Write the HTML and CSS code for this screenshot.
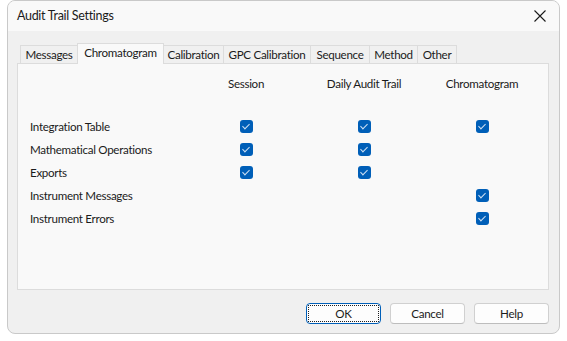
FILE: index.html
```html
<!DOCTYPE html>
<html lang="en">
<head>
    <meta charset="UTF-8">
    <title>Audit Trail Settings</title>
    <link rel="stylesheet" href="styles.css">
</head>
<body>
    <div class="window">
        <div class="titlebar">
            <span class="title">Audit Trail Settings</span>
            <svg class="close" width="12" height="12" viewBox="0 0 12 12">
                <path d="M0.5 0.5 L11.5 11.5 M11.5 0.5 L0.5 11.5" stroke="#1a1a1a" stroke-width="1.1" fill="none"/>
            </svg>
        </div>
        <div class="content">
            <div class="tabs">
                <div class="tab t-messages">Messages</div>
                <div class="tab active t-chrom">Chromatogram</div>
                <div class="tab t-calib">Calibration</div>
                <div class="tab t-gpc">GPC Calibration</div>
                <div class="tab t-seq">Sequence</div>
                <div class="tab t-method">Method</div>
                <div class="tab t-other">Other</div>
            </div>
            <div class="panel">
                <div class="grid">
                    <div></div>
                    <div class="head">Session</div>
                    <div class="head">Daily Audit Trail</div>
                    <div class="head">Chromatogram</div>
                </div>
                <div class="grid rows">
                    <div class="label">Integration Table</div>
                    <div class="cell"><span class="check"></span></div>
                    <div class="cell"><span class="check"></span></div>
                    <div class="cell"><span class="check"></span></div>

                    <div class="label">Mathematical Operations</div>
                    <div class="cell"><span class="check"></span></div>
                    <div class="cell"><span class="check"></span></div>
                    <div class="cell"></div>

                    <div class="label">Exports</div>
                    <div class="cell"><span class="check"></span></div>
                    <div class="cell"><span class="check"></span></div>
                    <div class="cell"></div>

                    <div class="label">Instrument Messages</div>
                    <div class="cell"></div>
                    <div class="cell"></div>
                    <div class="cell"><span class="check"></span></div>

                    <div class="label">Instrument Errors</div>
                    <div class="cell"></div>
                    <div class="cell"></div>
                    <div class="cell"><span class="check"></span></div>
                </div>
            </div>
            <div class="buttons">
                <button class="btn default"><span>OK</span></button>
                <button class="btn"><span>Cancel</span></button>
                <button class="btn"><span>Help</span></button>
            </div>
        </div>
    </div>
</body>
</html>
```

FILE: styles.css
```css
body{
    margin: 0;
    background-color: #ffffff;
    font-family: Lato, "Noto Sans", sans-serif;
    font-size: 11.6px;
    letter-spacing: -0.3px;
    color: #1b1b1b;
}
.window{
    margin-left: 7px;
    width: 551px;
    height: 332px;
    border: 1px solid #c9c9c9;
    border-radius: 8px;
    background-color: #f0f0f0;
    overflow: hidden;
    display: flex;
    flex-direction: column;
}
.titlebar{
    height: 30px;
    background-color: #f9f9f9;
    display: flex;
    align-items: center;
    justify-content: space-between;
    padding: 0 13px 0 9px;
}
.title{
    font-size: 12.5px;
    margin-top: -1px;
}
.close{
    margin-bottom: 1px;
}
.content{
    padding: 11px 10px 0 9px;
}
.tabs{
    display: flex;
    align-items: flex-end;
    height: 21px;
    padding-left: 3px;
}
.tab{
    height: 18px;
    line-height: 17px;
    text-align: center;
    border: 1px solid #dcdcdc;
    border-bottom: none;
    margin-right: -1px;
    background-color: #f0f0f0;
    box-sizing: border-box;
    white-space: nowrap;
}
.tab.active{
    height: 21px;
    line-height: 18px;
    background-color: #f9f9f9;
    position: relative;
    margin-bottom: -1px;
    z-index: 1;
}
.t-messages{ width: 58px; }
.t-chrom{ width: 87px; }
.t-calib{ width: 61px; }
.t-gpc{ width: 88px; }
.t-seq{ width: 60px; }
.t-method{ width: 49px; }
.t-other{ width: 40px; }
.panel{
    height: 227px;
    background-color: #f9f9f9;
    border: 1px solid #dcdcdc;
    box-sizing: border-box;
    padding: 11px 0 0 12px;
}
.grid{
    display: grid;
    grid-template-columns: 157px 118px 118px 118px;
}
.head{
    text-align: center;
    height: 18px;
    line-height: 18px;
}
.rows{
    margin-top: 22px;
    grid-auto-rows: 23px;
}
.label, .cell{
    display: flex;
    align-items: center;
}
.cell{
    justify-content: center;
}
.check{
    width: 13px;
    height: 13px;
    border-radius: 3px;
    background-color: #005fb8;
    position: relative;
}
.check::after{
    content: "";
    position: absolute;
    left: 4px;
    top: 2px;
    width: 3px;
    height: 6px;
    border: solid #cfe1f3;
    border-width: 0 1px 1px 0;
    transform: rotate(45deg);
}
.buttons{
    display: flex;
    justify-content: flex-end;
    gap: 9px;
    margin-top: 13px;
}
.btn{
    width: 75px;
    height: 21px;
    padding: 0;
    font-family: inherit;
    font-size: 11.6px;
    letter-spacing: -0.3px;
    color: #1b1b1b;
    background-color: #fdfdfd;
    border: 1px solid #d0d0d0;
    border-bottom-color: #bdbdbd;
    border-radius: 4px;
    display: flex;
    align-items: center;
    justify-content: center;
}
.btn.default{
    border: 1px solid #005fb8;
    padding: 1px;
}
.btn.default span{
    width: 100%;
    height: 100%;
    border: 1px dotted #202020;
    box-sizing: border-box;
    display: flex;
    align-items: center;
    justify-content: center;
}
```
